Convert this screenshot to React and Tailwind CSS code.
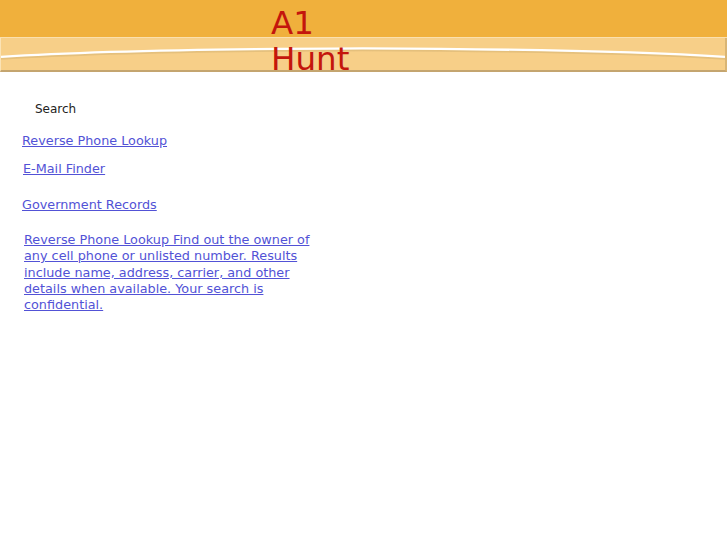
import React from 'react';

const font = { fontFamily: '"DejaVu Sans", Verdana, sans-serif' };

const Band = () => (
  <div className="relative h-[34px] bg-[#f7cf88] border-b-2 border-[#c4a56f] border-l border-l-[#fbe3b5] border-r-2 border-r-[#d9b574]">
    <svg className="absolute inset-0 w-full h-full" viewBox="0 0 727 34" preserveAspectRatio="none">
      <path d="M0 20 Q 120 12 363 11 Q 606 12 727 20" fill="none" stroke="#d9b574" strokeWidth="3" opacity="0.6" transform="translate(0 1.5)" />
      <path d="M0 20 Q 120 12 363 11 Q 606 12 727 20" fill="none" stroke="#ffffff" strokeWidth="2.5" />
    </svg>
  </div>
);

export default function App() {
  return (
    <div className="min-h-[545px] bg-white" style={font}>
      <div className="relative">
        <div className="h-[38px] bg-[#f0b03c] border-b border-[#fbe0ae]" />
        <Band />
        <div className="absolute left-[271px] top-[5px] text-[32.5px] leading-[36px] text-[#c4160c]">
          A1<br />Hunt
        </div>
      </div>

      <div className="pl-[35px] pt-[30px] text-[12px] leading-[14px] text-[#222]">Search</div>

      <div className="pl-[22px] text-[12.8px] leading-[15px] text-[#5252d6]">
        <a href="#" className="block underline mt-[17px]">Reverse Phone Lookup</a>
        <a href="#" className="block underline mt-[13px] ml-[1px]">E-Mail Finder</a>
        <a href="#" className="block underline mt-[21px]">Government Records</a>
        <a href="#" className="block underline mt-[20px] ml-[2px] w-[286px] leading-[16.3px]">
          Reverse Phone Lookup Find out the owner of any cell phone or unlisted number. Results include name, address, carrier, and other details when available. Your search is confidential.
        </a>
      </div>
    </div>
  );
}
